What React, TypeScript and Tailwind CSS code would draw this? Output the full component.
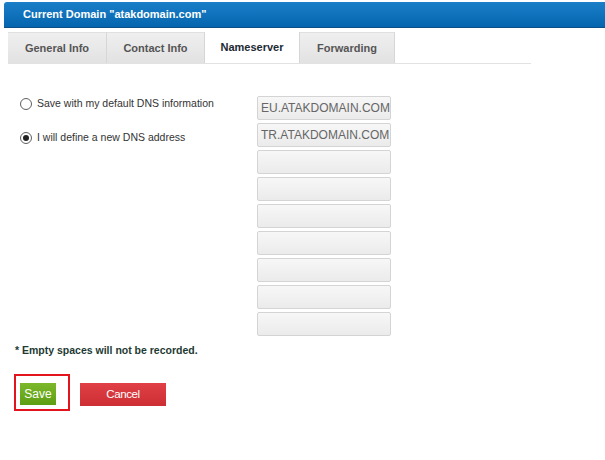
import React from "react";

const tabs = [
  { label: "General Info", w: "w-[99px]", active: false },
  { label: "Contact Info", w: "w-[98px]", active: false },
  { label: "Nameserver", w: "w-[95px]", active: true },
  { label: "Forwarding", w: "w-[95px]", active: false },
];

const values = ["EU.ATAKDOMAIN.COM", "TR.ATAKDOMAIN.COM", "", "", "", "", "", "", ""];

function Radio({ checked }: { checked: boolean }) {
  return (
    <span className="flex h-[12px] w-[12px] items-center justify-center rounded-full border border-[#5f5f5f] bg-white">
      {checked && <span className="h-[6px] w-[6px] rounded-full bg-[#222]" />}
    </span>
  );
}

export default function App() {
  return (
    <div className="h-[460px] w-[605px] overflow-hidden bg-white font-['Liberation_Sans',Arial,sans-serif]">
      <div className="ml-[4px] mt-[2px] flex h-[26px] items-center rounded-tl-[3px] border-b border-[#0a4f86] bg-gradient-to-b from-[#1a7fc8] to-[#0565af] pl-[19px] text-[11px] font-bold text-white">
        Current Domain "atakdomain.com"
      </div>
      <div className="ml-[8px] mt-[4px] flex w-[523px] border-b border-[#e2e2e2]">
        {tabs.map((t) => (
          <div
            key={t.label}
            className={`${t.w} flex h-[31px] items-center justify-center border-r border-[#d6d6d6] text-[11px] font-bold ${
              t.active ? "bg-white text-[#1c2a33]" : "border-t border-t-[#e0e0e0] bg-gradient-to-b from-[#efefef] to-[#e2e2e2] text-[#555]"
            }`}
          >
            {t.label}
          </div>
        ))}
        <div className="flex-1" />
      </div>

      <div className="mt-[32px] flex pl-[20px]">
        <div className="flex w-[237px] flex-col">
          <div className="mt-[2px] flex h-[12px] items-center gap-[5px]">
            <Radio checked={false} />
            <span className="text-[10.5px] text-[#333]">Save with my default DNS information</span>
          </div>
          <div className="mt-[22px] flex h-[12px] items-center gap-[5px]">
            <Radio checked={true} />
            <span className="text-[10.5px] text-[#333]">I will define a new DNS address</span>
          </div>
        </div>
        <div className="flex flex-col gap-[3px]">
          {values.map((v, i) => (
            <div
              key={i}
              className="flex h-[24px] w-[134px] items-center overflow-hidden whitespace-nowrap rounded-[2px] border border-[#d4d4d4] bg-gradient-to-b from-[#f7f7f7] to-[#ebebeb] pl-[3px] text-[12px] text-[#666]"
            >
              {v}
            </div>
          ))}
        </div>
      </div>

      <div className="ml-[15px] mt-[7px] text-[10.5px] font-bold leading-[14px] text-[#1d3a33]">
        * Empty spaces will not be recorded.
      </div>

      <div className="ml-[14px] mt-[17px] flex items-start">
        <div className="h-[37px] w-[56px] border-2 border-[#e3141b] pl-[4px] pt-[7px]">
          <div className="flex h-[22px] w-[36px] items-center justify-center bg-gradient-to-b from-[#7cb82a] to-[#5e9e12] text-[12px] text-white">
            Save
          </div>
        </div>
        <div className="ml-[10px] mt-[9px] flex h-[23px] w-[86px] items-center justify-center bg-gradient-to-b from-[#e04046] to-[#cc2e33] text-[11.5px] tracking-[-0.4px] text-white">
          Cancel
        </div>
      </div>
    </div>
  );
}
